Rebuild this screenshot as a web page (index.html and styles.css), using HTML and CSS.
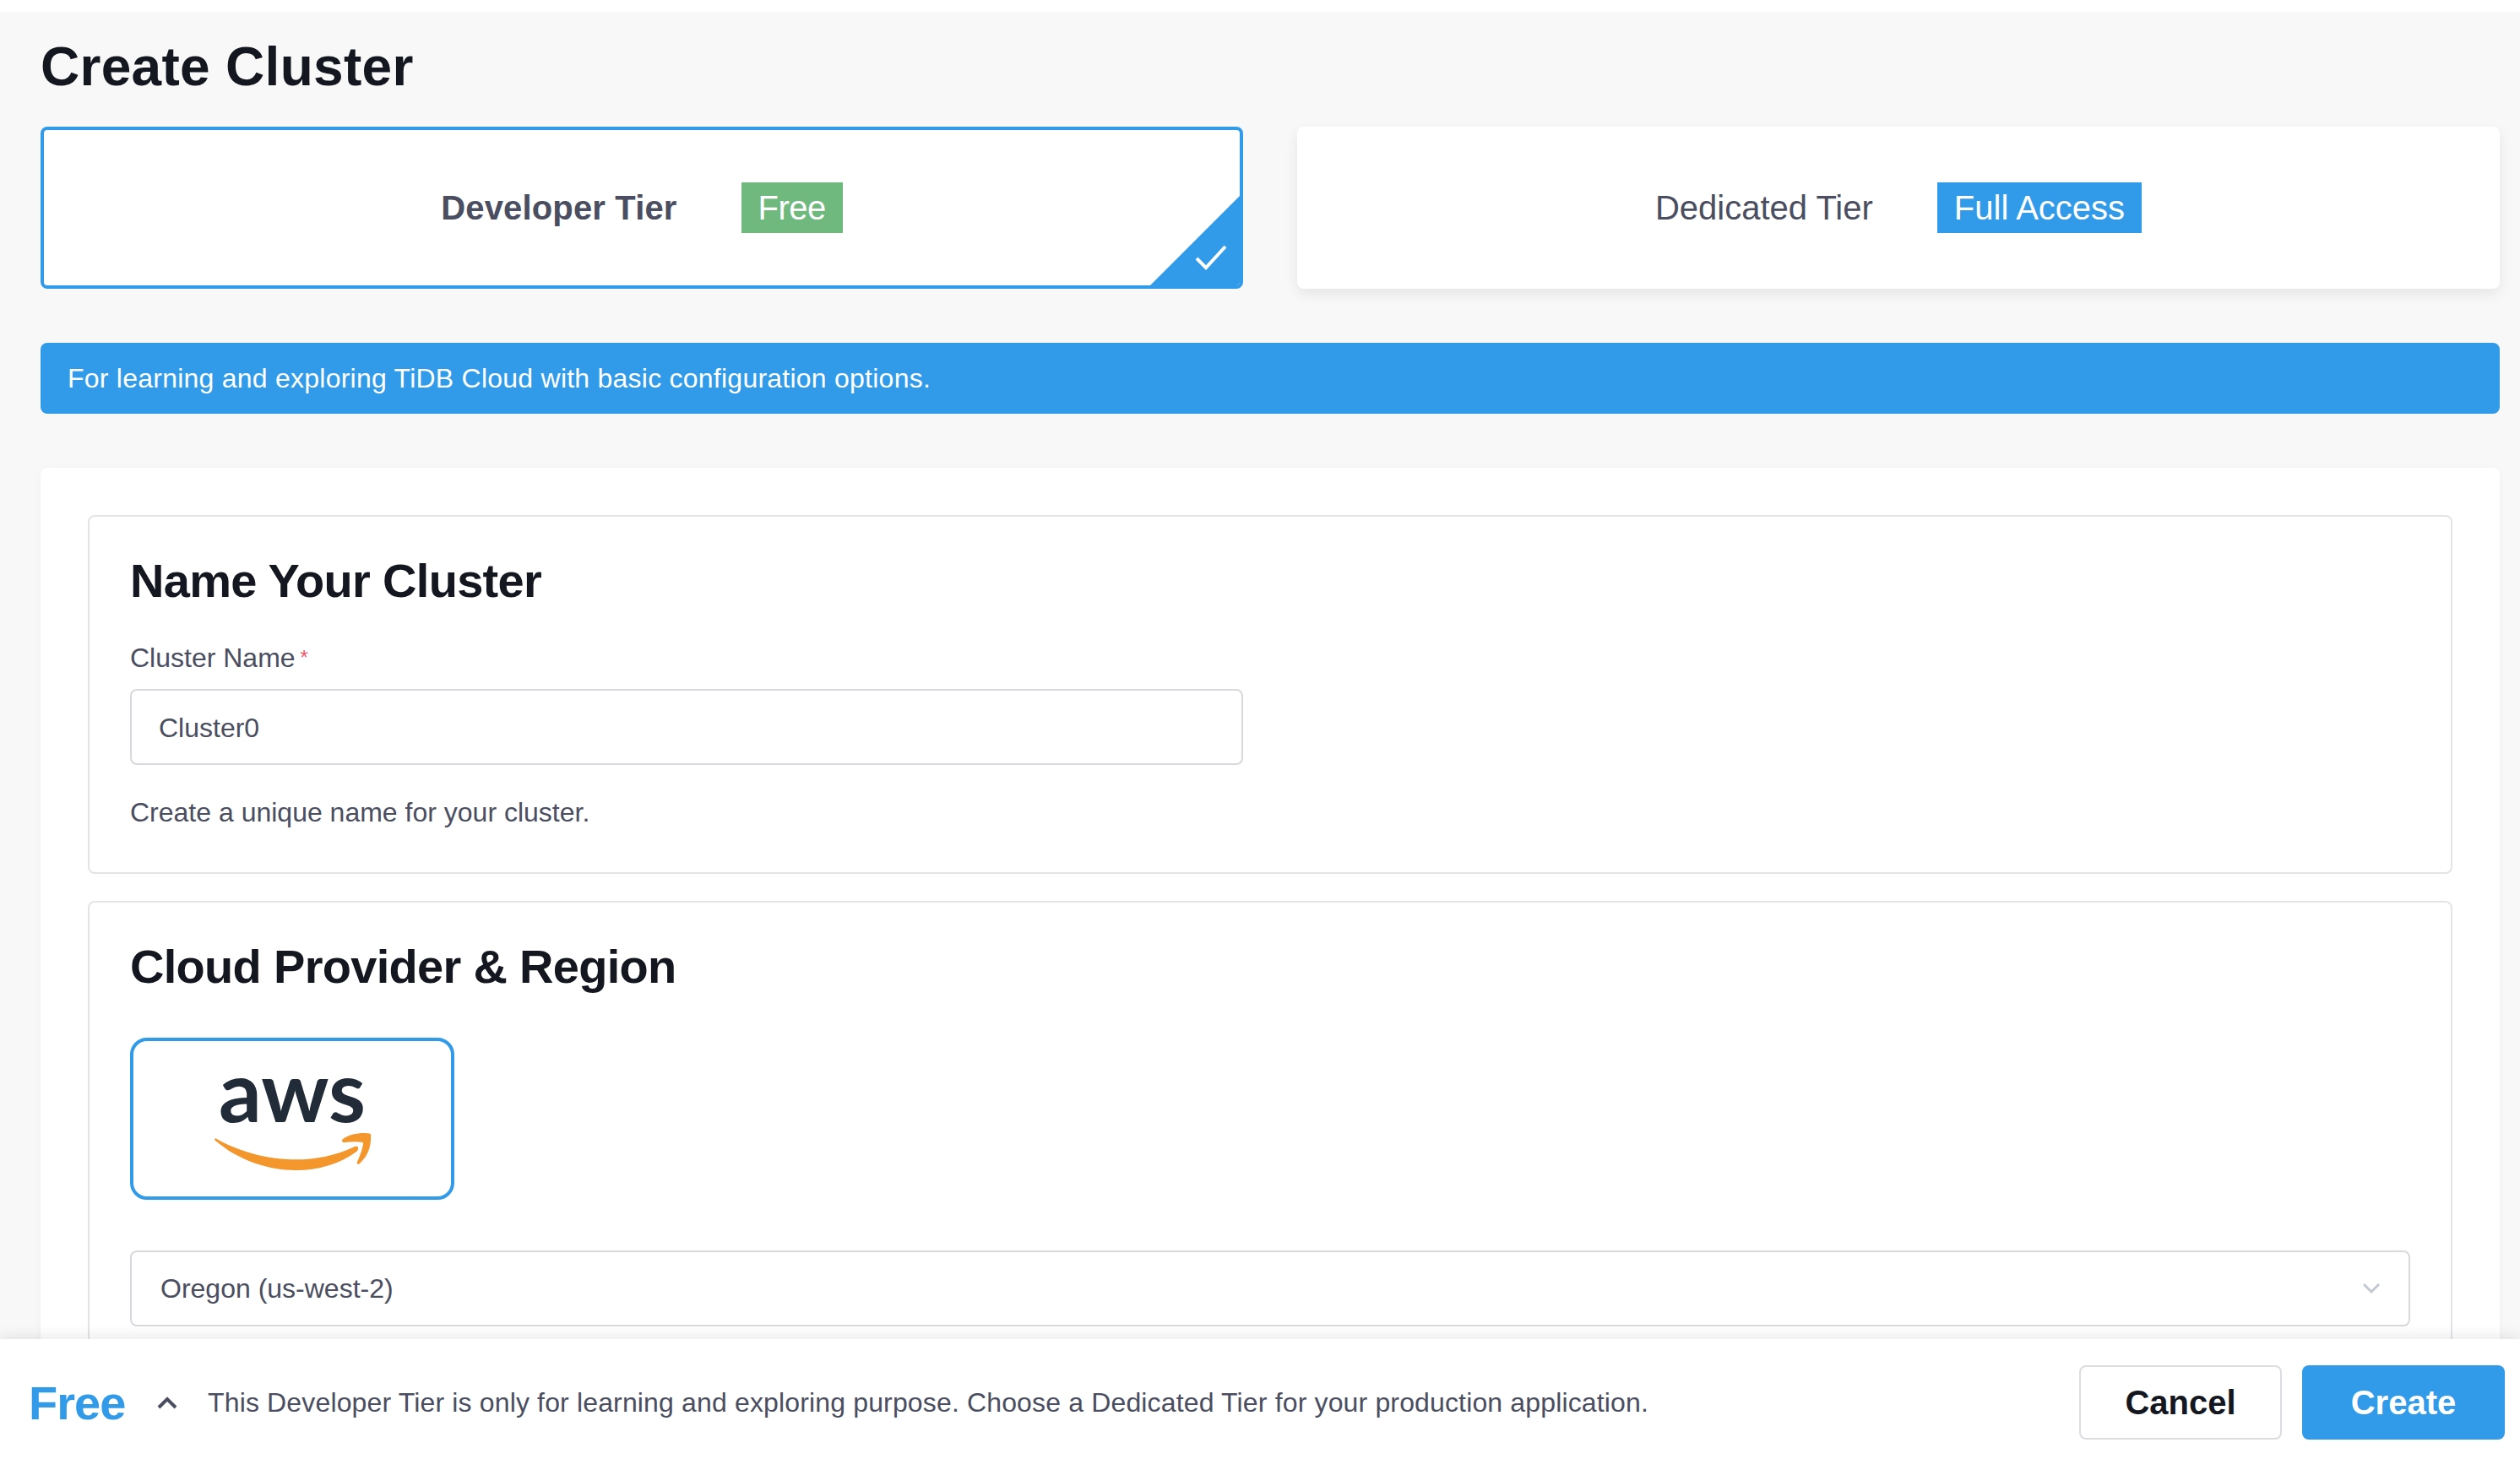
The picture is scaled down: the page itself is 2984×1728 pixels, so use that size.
FILE: index.html
```html
<!DOCTYPE html>
<html lang="en">
<head>
    <meta charset="UTF-8">
    <title>Create Cluster</title>
    <link rel="stylesheet" href="styles.css">
</head>
<body>
    <div class="page">
        <h1 class="page-title">Create Cluster</h1>

        <!-- Tier picker -->
        <div class="tiers">
            <div class="tier tier-active">
                <span class="tier-name">Developer Tier</span>
                <span class="tier-badge badge-green">Free</span>
                <span class="tier-corner">
                    <svg viewBox="0 0 114 114" width="114" height="114">
                        <path d="M59 78 L70 89 L93 64" fill="none" stroke="#fff" stroke-width="4"/>
                    </svg>
                </span>
            </div>
            <div class="tier">
                <span class="tier-name">Dedicated Tier</span>
                <span class="tier-badge badge-blue">Full Access</span>
            </div>
        </div>

        <div class="banner">For learning and exploring TiDB Cloud with basic configuration options.</div>

        <div class="main-card">
            <section class="box box-name">
                <h2>Name Your Cluster</h2>
                <label class="field-label">Cluster Name<span class="required">*</span></label>
                <div class="text-input">Cluster0</div>
                <p class="help">Create a unique name for your cluster.</p>
            </section>

            <section class="box">
                <h2>Cloud Provider &amp; Region</h2>
                <div class="provider">
                    <span class="aws-word">aws</span>
                    <svg class="aws-smile" viewBox="0 0 188 48" width="188" height="48">
                        <path d="M1 8 C44 33 110 45 166 18 C170 16 172 21 168 24 C122 58 48 52 0 10 Z" fill="#f3962c"/>
                        <path d="M152 9 C162 2 177 1 185 3 C186 15 183 28 172 38 C170 40 168 38 169 36 C173 27 176 19 176 13 C170 12 162 12 154 13 C151 13 150 11 152 9 Z" fill="#f3962c"/>
                    </svg>
                </div>
                <div class="select">
                    <span>Oregon (us-west-2)</span>
                    <svg viewBox="0 0 20 14" width="20" height="14">
                        <path d="M1 2 L10 11 L19 2" fill="none" stroke="#c3c9d3" stroke-width="3"/>
                    </svg>
                </div>
            </section>
        </div>
    </div>

    <!-- Sticky footer -->
    <div class="footer">
        <div class="footer-left">
            <span class="footer-price">Free</span>
            <svg class="footer-chevron" viewBox="0 0 24 16" width="24" height="16">
                <path d="M2 14 L12 4 L22 14" fill="none" stroke="#4a4e60" stroke-width="4"/>
            </svg>
            <span class="footer-text">This Developer Tier is only for learning and exploring purpose. Choose a Dedicated Tier for your production application.</span>
        </div>
        <div class="footer-actions">
            <button class="btn btn-cancel">Cancel</button>
            <button class="btn btn-create">Create</button>
        </div>
    </div>
</body>
</html>
```

FILE: styles.css
```css
* {
    box-sizing: border-box;
}

html, body {
    height: 100%;
}

body {
    margin: 0;
    padding-top: 14px;
    height: 1728px;
    overflow: hidden;
    background-color: #fff;
    font-family: 'Liberation Sans', Arial, sans-serif;
    color: #4a4e60;
}

.page {
    height: 1714px;
    padding: 0 24px 0 48px;
    background-color: #f8f8f8;
    overflow: hidden;
}

.page-title {
    margin: 0;
    height: 136px;
    line-height: 92px;
    padding-top: 19px;
    font-size: 64px;
    font-weight: 700;
    letter-spacing: 0.3px;
    color: #14171f;
}

.tiers {
    display: grid;
    grid-template-columns: 1424px 1424px;
    gap: 64px;
}

.tier {
    position: relative;
    height: 192px;
    display: flex;
    align-items: center;
    justify-content: center;
    gap: 76px;
    background-color: #fff;
    border-radius: 8px;
    box-shadow: 0 6px 16px rgba(0, 0, 0, 0.08);
    font-size: 40px;
}

.tier-active {
    border: 4px solid #319be9;
    box-shadow: none;
    overflow: hidden;
}

.tier-active .tier-name {
    font-weight: 700;
    letter-spacing: 0.15px;
}

.tier-badge {
    height: 60px;
    line-height: 60px;
    padding: 0 20px;
    color: #fff;
}

.badge-green {
    background-color: #6fb97f;
    letter-spacing: -0.5px;
}

.badge-blue {
    background-color: #319be9;
}

.tier-corner {
    position: absolute;
    right: -4px;
    bottom: -4px;
    width: 114px;
    height: 114px;
    background-color: #319be9;
    clip-path: polygon(100% 0, 100% 100%, 0 100%);
}

.tier-corner svg {
    display: block;
}

.banner {
    margin-top: 64px;
    height: 84px;
    line-height: 84px;
    padding: 0 32px;
    background-color: #319be9;
    border-radius: 8px;
    color: #fff;
    font-size: 32px;
    letter-spacing: 0.24px;
}

.main-card {
    margin-top: 64px;
    padding: 56px;
    background-color: #fff;
    border-radius: 8px;
    box-shadow: 0 2px 10px rgba(0, 0, 0, 0.04);
}

.box {
    padding: 0 48px;
    border: 2px solid #e3e4e6;
    border-radius: 8px;
}

.box-name {
    height: 425px;
    margin-bottom: 32px;
}

.box h2 {
    margin: 0;
    padding-top: 44px;
    line-height: 64px;
    font-size: 56px;
    font-weight: 700;
    letter-spacing: -0.7px;
    color: #14171f;
}

.field-label {
    display: block;
    margin-top: 37px;
    line-height: 44px;
    font-size: 32px;
}

.required {
    margin-left: 6px;
    color: #f0596e;
    font-size: 24px;
    vertical-align: top;
}

.text-input {
    width: 1318px;
    height: 90px;
    margin-top: 15px;
    padding: 0 32px;
    line-height: 88px;
    border: 2px solid #d8d9dc;
    border-radius: 8px;
    font-size: 32px;
}

.help {
    margin: 34px 0 0;
    line-height: 44px;
    font-size: 32px;
}

.provider {
    position: relative;
    width: 384px;
    height: 192px;
    margin-top: 52px;
    border: 4px solid #319be9;
    border-radius: 20px;
    text-align: center;
}

.aws-word {
    display: block;
    margin-top: 7px;
    line-height: 100px;
    font-family: 'Lato', sans-serif;
    font-size: 100px;
    font-weight: 700;
    color: #222b38;
}

.aws-smile {
    position: absolute;
    left: 96px;
    top: 107px;
}

.select {
    display: flex;
    align-items: center;
    justify-content: space-between;
    height: 90px;
    margin-top: 60px;
    margin-bottom: 100px;
    padding: 0 34px 0 34px;
    border: 2px solid #d8d9dc;
    border-radius: 8px;
    font-size: 32px;
}

.footer {
    position: absolute;
    left: 0;
    right: 0;
    top: 1586px;
    height: 142px;
    display: flex;
    align-items: center;
    justify-content: space-between;
    padding: 8px 18px 0 34px;
    background-color: #fff;
    box-shadow: 0 -4px 14px rgba(50, 60, 80, 0.1);
}

.footer-left {
    display: flex;
    align-items: center;
}

.footer-price {
    width: 152px;
    font-size: 56px;
    font-weight: 700;
    letter-spacing: -1px;
    color: #319be9;
}

.footer-chevron {
    margin-right: 36px;
}

.footer-text {
    font-size: 32px;
    letter-spacing: 0.15px;
}

.footer-actions {
    display: flex;
    gap: 24px;
}

.btn {
    width: 240px;
    height: 88px;
    border-radius: 8px;
    font-family: inherit;
    font-size: 40px;
}

.btn-cancel {
    background-color: #fff;
    border: 2px solid #dcdde0;
    color: #14171f;
    font-weight: 700;
}

.btn-create {
    background-color: #319be9;
    border: none;
    color: #fff;
    font-weight: 700;
}
```
